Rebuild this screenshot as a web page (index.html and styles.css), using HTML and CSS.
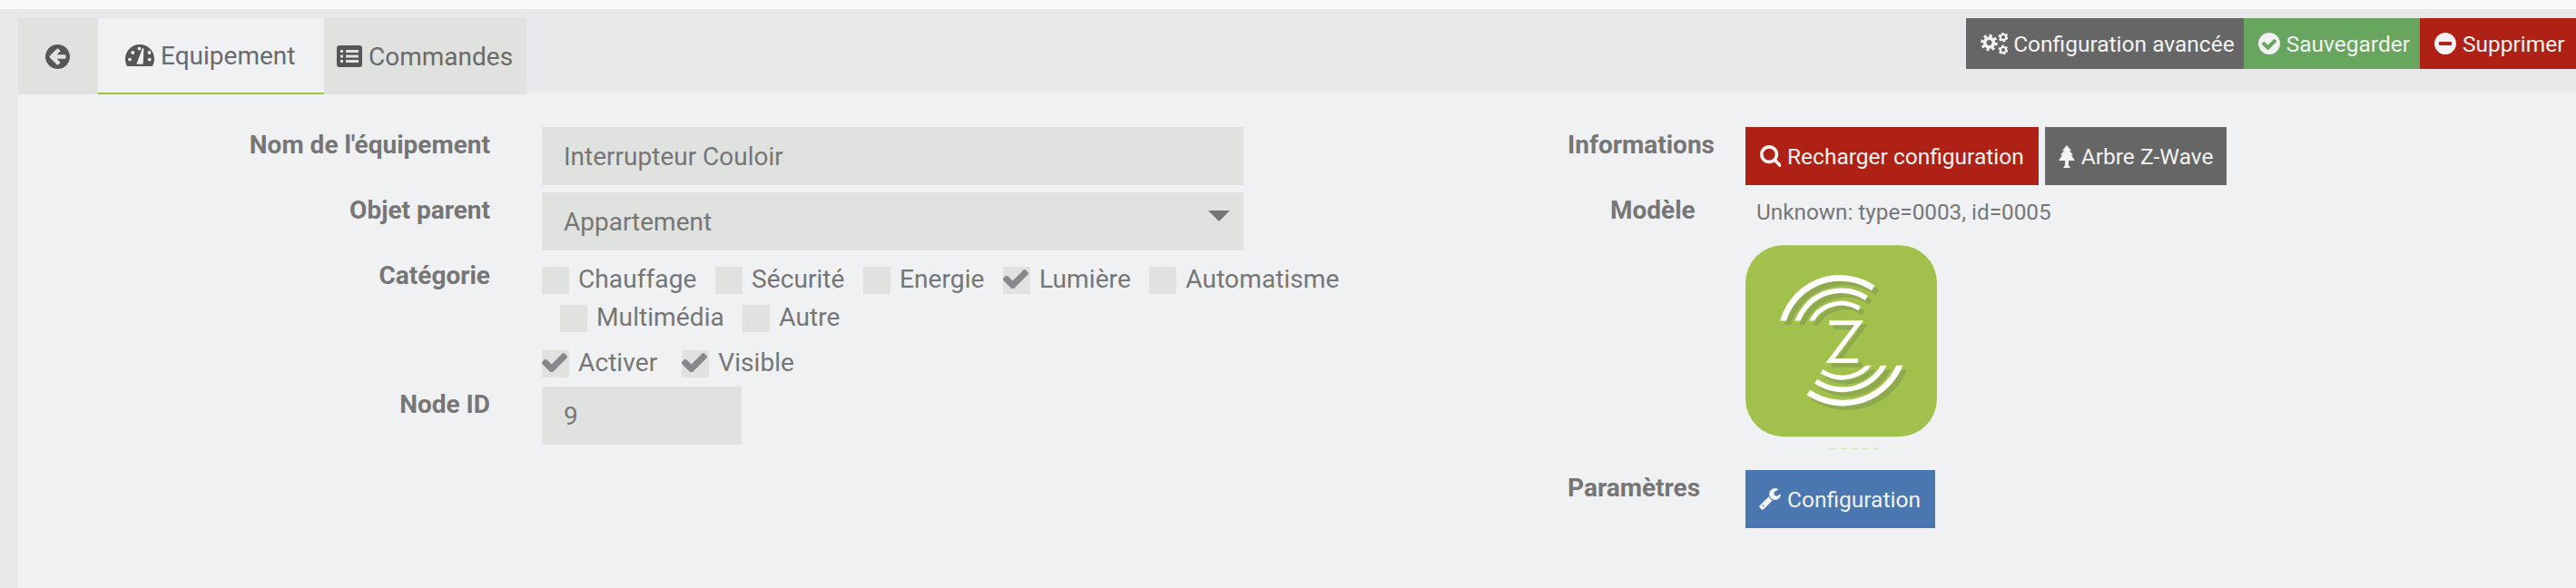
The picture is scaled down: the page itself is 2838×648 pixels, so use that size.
FILE: index.html
```html
<!DOCTYPE html>
<html>
<head>
<meta charset="utf-8">
<title>Interrupteur Couloir</title>
<link rel="stylesheet" href="styles.css">
</head>
<body>
	<div class="topstrip"></div>

	<div class="page">
		<div class="header">
			<div class="tabs">
				<div class="tab tab-back">
					<svg class="ico ico-back" viewBox="128 128 1536 1536"><path d="M1408 960v-128q0-26-19-45t-45-19h-502l189-189q19-19 19-45t-19-45l-91-91q-18-18-45-18t-45 18l-362 362-91 91q-18 18-18 45t18 45l91 91 362 362q18 18 45 18t45-18l91-91q18-18 18-45t-18-45l-189-189h502q26 0 45-19t19-45zm256-64q0 209-103 385.5t-279.5 279.5-385.5 103-385.5-103-279.5-279.5-103-385.5 103-385.5 279.5-279.5 385.5-103 385.5 103 279.5 279.5 103 385.5z"/></svg>
				</div>
				<div class="tab tab-active">
					<svg class="ico ico-gauge" viewBox="0 0 32 24"><path fill-rule="evenodd" d="M16 0C7 0 0 7 0 16c0 3 .8 5.600 2.200 8h27.600c1.400-2.400 2.200-5 2.200-8C32 7 25 0 16 0zM5 18.500a1.900 1.900 0 1 1 0-3.800 1.900 1.900 0 0 1 0 3.800zM8.300 10.900a1.900 1.900 0 1 1 0-3.800 1.900 1.900 0 0 1 0 3.800zM15.500 6.500a1.900 1.900 0 1 1 0-3.800 1.900 1.900 0 0 1 0 3.800zM12.400 21.800L18.800 4.600c.3-.5 1.700-.3 1.600.4L19.600 21.800zM26.500 10.900a1.900 1.900 0 1 1 0-3.800 1.900 1.900 0 0 1 0 3.800zM26.700 18.500a1.900 1.900 0 1 1 0-3.800 1.900 1.900 0 0 1 0 3.800z"/></svg>
					Equipement
				</div>
				<div class="tab">
					<svg class="ico ico-list" viewBox="0 0 28 24"><path fill-rule="evenodd" d="M3 0h22a3 3 0 0 1 3 3v18a3 3 0 0 1-3 3H3a3 3 0 0 1-3-3V3a3 3 0 0 1 3-3zM4 5v3h3V5zM10 5v3h14V5zM4 10.500v3h3v-3zM10 10.500v3h14v-3zM4 16v3h3v-3zM10 16v3h14v-3z"/></svg>
					Commandes
				</div>
			</div>
			<div class="actions">
				<div class="btn btn-grey btn-config">
					<svg class="ico ico-cogs" viewBox="0 0 30 24">
						<circle class="cog-teeth" cx="9.500" cy="11" r="7.800"/>
						<circle class="cog-body" cx="9.500" cy="11" r="4.900"/>
						<circle class="cog-teeth-s" cx="25" cy="5" r="4.500"/>
						<circle class="cog-body-s" cx="25" cy="5" r="3.200"/>
						<circle class="cog-teeth-s" cx="25" cy="19" r="4.500"/>
						<circle class="cog-body-s" cx="25" cy="19" r="3.200"/>
					</svg>
					Configuration avancée
				</div>
				<div class="btn btn-green">
					<svg class="ico ico-round" viewBox="128 128 1536 1536"><path d="M1412 734q0-28-18-46l-91-90q-19-19-45-19t-45 19l-408 407-226-226q-19-19-45-19t-45 19l-91 90q-18 18-18 46 0 27 18 45l362 362q19 19 45 19 27 0 46-19l543-543q18-18 18-45zm252 162q0 209-103 385.5t-279.500 279.500-385.500 103-385.500-103-279.500-279.500-103-385.500 103-385.500 279.500-279.500 385.500-103 385.500 103 279.500 279.500 103 385.500z"/></svg>
					Sauvegarder
				</div>
				<div class="btn btn-red btn-last">
					<svg class="ico ico-round" viewBox="128 128 1536 1536"><path d="M1344 960v-128q0-26-19-45t-45-19h-768q-26 0-45 19t-19 45v128q0 26 19 45t45 19h768q26 0 45-19t19-45zm320-64q0 209-103 385.500t-279.500 279.500-385.500 103-385.500-103-279.500-279.500-103-385.500 103-385.500 279.500-279.500 385.500-103 385.500 103 279.500 279.500 103 385.500z"/></svg>
					Supprimer
				</div>
			</div>
		</div>

		<div class="form">
			<div class="col-left">
				<div class="row">
					<div class="label">Nom de l'équipement</div>
					<input class="field field-wide" type="text" value="Interrupteur Couloir" readonly>
				</div>
				<div class="row">
					<div class="label">Objet parent</div>
					<div class="select-wrap">
						<select class="field field-wide">
							<option>Appartement</option>
						</select>
					</div>
				</div>
				<div class="row row-checks">
					<div class="label label-checks">Catégorie</div>
					<div class="checks">
						<div class="check-line">
							<div class="check"><span class="box"></span>Chauffage</div>
							<div class="check"><span class="box"></span>Sécurité</div>
							<div class="check"><span class="box"></span>Energie</div>
							<div class="check"><span class="box"><svg class="tick" viewBox="128 320 1543 1120"><path d="M1671 566q0 40-28 68l-724 724-136 136q-28 28-68 28t-68-28l-136-136-362-362q-28-28-28-68t28-68l136-136q28-28 68-28t68 28l294 295 656-657q28-28 68-28t68 28l136 136q28 28 28 68z"/></svg></span>Lumière</div>
							<div class="check"><span class="box"></span>Automatisme</div>
						</div>
						<div class="check-line check-line-sub">
							<div class="check"><span class="box"></span>Multimédia</div>
							<div class="check"><span class="box"></span>Autre</div>
						</div>
					</div>
				</div>
				<div class="row row-checks">
					<div class="label label-empty"></div>
					<div class="check-line check-line-wide">
						<div class="check"><span class="box"><svg class="tick" viewBox="128 320 1543 1120"><path d="M1671 566q0 40-28 68l-724 724-136 136q-28 28-68 28t-68-28l-136-136-362-362q-28-28-28-68t28-68l136-136q28-28 68-28t68 28l294 295 656-657q28-28 68-28t68 28l136 136q28 28 28 68z"/></svg></span>Activer</div>
						<div class="check"><span class="box"><svg class="tick" viewBox="128 320 1543 1120"><path d="M1671 566q0 40-28 68l-724 724-136 136q-28 28-68 28t-68-28l-136-136-362-362q-28-28-28-68t28-68l136-136q28-28 68-28t68 28l294 295 656-657q28-28 68-28t68 28l136 136q28 28 28 68z"/></svg></span>Visible</div>
					</div>
				</div>
				<div class="row">
					<div class="label">Node ID</div>
					<input class="field field-small" type="text" value="9" readonly>
				</div>
			</div>

			<div class="col-right">
				<div class="info-row">
					<div class="info-label">Informations</div>
					<div class="info-btns">
						<div class="btn btn-red btn-tall">
							<svg class="ico ico-round" viewBox="0 128 1664 1664"><path d="M1216 832q0-185-131.500-316.500t-316.500-131.500-316.500 131.500-131.500 316.500 131.500 316.500 316.500 131.500 316.500-131.500 131.500-316.500zm512 832q0 52-38 90t-90 38q-54 0-90-38l-343-342q-179 124-399 124-143 0-273.500-55.500t-225-150-150-225-55.500-273.500 55.500-273.500 150-225 225-150 273.500-55.500 273.500 55.500 225 150 150 225 55.500 273.500q0 220-124 399l343 343q37 37 37 90z"/></svg>
							Recharger configuration
						</div>
						<div class="btn btn-grey btn-tall btn-tree">
							<svg class="ico ico-tree" viewBox="0 0 18 25"><path d="M9 0l5 6h-2l4 5h-2l4 6h-7v5l2 3H5l2-3v-5H0l4-6H2l4-5H4z"/></svg>
							Arbre Z-Wave
						</div>
					</div>
				</div>
				<div class="info-row info-row-model">
					<div class="info-label info-label-model">Modèle</div>
					<div class="model-text">Unknown: type=0003, id=0005</div>
				</div>
				<div class="info-row info-row-logo">
					<div class="info-label"></div>
					<svg class="logo" viewBox="70 30 633 680">
						<rect class="logo-bg" x="70" y="30" width="633" height="633" rx="125"/>
						<defs>
							<clipPath id="clip-top"><rect x="150" y="100" width="400" height="180"/></clipPath>
							<clipPath id="clip-bottom"><rect x="240" y="428" width="400" height="160"/></clipPath>
							<g id="zmark" fill="none">
								<g clip-path="url(#clip-top)">
									<path stroke-width="20" d="M190 300A196 196 0 0 1 492 172"/>
									<path stroke-width="17" d="M236 300A154 154 0 0 1 470 205"/>
									<path stroke-width="15" d="M280 300A112 112 0 0 1 447 240"/>
								</g>
								<polyline stroke-width="15" points="347,287 445,287 350,412 442,412"/>
								<g clip-path="url(#clip-bottom)">
									<path stroke-width="20" d="M586 410A204 204 0 0 1 278 517"/>
									<path stroke-width="17" d="M536 410A156 156 0 0 1 303 480"/>
									<path stroke-width="15" d="M490 410A118 118 0 0 1 322 447"/>
								</g>
							</g>
						</defs>
						<use class="logo-shadow" href="#zmark" x="14" y="14"/>
						<use class="logo-mark" href="#zmark"/>
						<line class="logo-caption" x1="348" y1="703" x2="507" y2="703"/>
					</svg>
				</div>
				<div class="info-row">
					<div class="info-label">Paramètres</div>
					<div class="btn btn-blue btn-tall">
						<svg class="ico ico-round" viewBox="64 128 1664 1664"><path d="M448 1472q0-26-19-45t-45-19-45 19-19 45 19 45 45 19 45-19 19-45zm644-420l-682 682q-37 37-90 37-52 0-91-37l-106-108q-38-36-38-90 0-53 38-91l681-681q39 98 114.500 173.500t173.500 114.500zm634-435q0 39-23 106-47 134-164.500 217.500t-258.500 83.500q-185 0-316.500-131.500t-131.500-316.500 131.500-316.500 316.500-131.500q58 0 121.500 16.500t107.500 46.500q16 11 16 28t-16 28l-293 169v224l193 107q5-3 79-48.500t135.500-81 70.500-35.500q15 0 23.500 10t8.500 25z"/></svg>
						Configuration
					</div>
				</div>
			</div>
		</div>
	</div>
</body>
</html>
```

FILE: styles.css
```css
* {
  box-sizing: border-box;
}

html, body {
  margin: 0;
  height: 100%;
}

body {
  background: #e8e8ea;
  color: #767676;
  font-family: Roboto, "Liberation Sans", sans-serif;
  font-size: 28px;
  overflow: hidden;
}

.topstrip {
  height: 10px;
  background: #fafafa;
}

.page {
  margin-left: 20px;
  height: 638px;
  background: #f0f1f3;
}

/* Header band */
.header {
  display: flex;
  justify-content: space-between;
  align-items: flex-start;
  height: 92px;
  padding-top: 10px;
  margin-left: -20px;
  padding-left: 20px;
  background: #e8e8ea;
}

.tabs {
  display: flex;
  height: 84px;
  position: relative;
  z-index: 1;
}

.tab {
  display: flex;
  align-items: center;
  gap: 7px;
  padding: 0 15px 0 14px;
  background: #e0e2e0;
  color: #6a6a6a;
}

.tab-back {
  width: 88px;
  padding: 0 0 0 30px;
}

.tab-active {
  width: 249px;
  padding: 0 0 0 30px;
  background: #f0f1f3;
  border-bottom: 2px solid #9bc63f;
}

.ico {
  flex: none;
  fill: currentColor;
}

.ico-back {
  width: 27px;
  height: 27px;
  fill: #565656;
}

.ico-gauge {
  width: 32px;
  height: 24px;
  fill: #565656;
}

.ico-list {
  width: 28px;
  height: 24px;
  fill: #565656;
}

.ico-cogs {
  width: 30px;
  height: 24px;
}

.cog-body, .cog-body-s, .cog-teeth, .cog-teeth-s {
  fill: none;
  stroke: currentColor;
}

.cog-body {
  stroke-width: 3.8;
}

.cog-body-s {
  stroke-width: 2.2;
}

.cog-teeth {
  stroke-width: 3;
  stroke-dasharray: 3.1 3;
}

.cog-teeth-s {
  stroke-width: 2;
  stroke-dasharray: 2.4 2.31;
}

.ico-round {
  width: 24px;
  height: 24px;
}

.ico-tree {
  width: 18px;
  height: 25px;
}

/* Buttons */
.actions {
  display: flex;
}

.btn {
  display: flex;
  align-items: center;
  gap: 7px;
  height: 56px;
  padding: 0 11px 0 16px;
  font-size: 24.5px;
  color: #f2f2f2;
}

.btn-config {
  gap: 6px;
  padding-right: 10px;
}

.btn-last {
  width: 172px;
}

.btn-tall {
  height: 64px;
  padding: 0 16px 0 15px;
}

.btn-tree {
  padding-right: 14px;
}

.btn-grey {
  background: #666;
}

.btn-green {
  background: #68a55e;
}

.btn-red {
  background: #ae2114;
}

.btn-blue {
  background: #4a77b0;
}

/* Form */
.form {
  display: flex;
  padding-top: 38px;
}

.col-left {
  display: flex;
  flex-direction: column;
  gap: 8px;
  width: 1707px;
}

.row {
  display: flex;
  align-items: flex-start;
  gap: 57px;
}

.row-checks {
  padding: 10px 0 2px;
}

.label {
  width: 520px;
  flex: none;
  line-height: 40px;
  font-weight: 700;
  font-size: 28px;
  text-align: right;
}

.label-checks {
  margin-top: -10px;
}

.label-empty {
  height: 30px;
}

.field {
  display: block;
  height: 64px;
  padding: 0 24px;
  border: 0;
  border-radius: 0;
  outline: 0;
  background: #e0e2e0;
  color: #767676;
  font-family: inherit;
  font-size: 28px;
  appearance: none;
}

.field-wide {
  width: 773px;
}

.field-small {
  width: 220px;
}

.select-wrap {
  position: relative;
}

/* select caret */
.select-wrap::after {
  content: "";
  position: absolute;
  top: 20px;
  right: 15px;
  border-style: solid;
  border-width: 12px 12px 0;
  border-color: #767676 transparent transparent;
}

.checks {
  display: flex;
  flex-direction: column;
  gap: 12px;
}

.check-line {
  display: flex;
  gap: 20.5px;
}

.check-line-sub {
  padding-left: 20px;
}

.check-line-wide {
  gap: 27px;
}

.check {
  display: flex;
  align-items: flex-start;
  gap: 10px;
  height: 30px;
  font-size: 28.2px;
  line-height: 28px;
}

.box {
  display: block;
  width: 30px;
  height: 30px;
  background: #e0e2e0;
}

.tick {
  display: block;
  width: 28px;
  height: 22px;
  margin-top: 2px;
  fill: #88888c;
}

/* Right column */
.col-right {
  display: flex;
  flex-direction: column;
  gap: 8px;
}

.info-row {
  display: flex;
  align-items: flex-start;
}

.info-row-model {
  height: 50px;
}

.info-row-logo {
  margin: 0 0 13px;
}

.info-label {
  width: 196px;
  flex: none;
  line-height: 40px;
  font-size: 28px;
  font-weight: 700;
}

.info-label-model {
  padding-left: 47px;
}

.info-btns {
  display: flex;
  gap: 7px;
}

.model-text {
  padding: 8px 0 0 12px;
  font-size: 24.3px;
  line-height: 28px;
}

.logo {
  display: block;
  width: 211px;
  height: 227px;
}

.logo-bg {
  fill: #a2c14c;
}

.logo-shadow {
  stroke: #8fa94f;
}

.logo-mark {
  stroke: #fff;
}

.logo-caption {
  stroke: #d9e4b4;
  stroke-width: 4;
  stroke-dasharray: 20 16;
}
```
